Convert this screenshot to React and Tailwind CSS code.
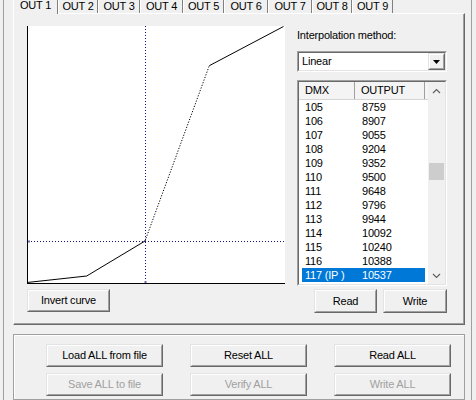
import React from "react";

const F = "font-['Liberation_Sans',Arial,sans-serif]";

function Btn({ children, className = "", disabled = false }) {
  return (
    <div
      className={`border border-t-[#e3e3e3] border-l-[#e3e3e3] border-r-[#696969] border-b-[#696969] bg-[#f0f0f0] ${className}`}
    >
      <div
        className={`h-full border border-t-white border-l-white border-r-[#a0a0a0] border-b-[#a0a0a0] flex items-center justify-center text-[11px] leading-none ${
          disabled ? "text-[#a0a0a0]" : "text-black"
        }`}
      >
        {children}
      </div>
    </div>
  );
}

const tabs = [
  ["OUT 1", 45],
  ["OUT 2", 40],
  ["OUT 3", 42],
  ["OUT 4", 43],
  ["OUT 5", 41],
  ["OUT 6", 44],
  ["OUT 7", 44],
  ["OUT 8", 40],
  ["OUT 9", 41],
];

const rows = [
  ["105", "8759"],
  ["106", "8907"],
  ["107", "9055"],
  ["108", "9204"],
  ["109", "9352"],
  ["110", "9500"],
  ["111", "9648"],
  ["112", "9796"],
  ["113", "9944"],
  ["114", "10092"],
  ["115", "10240"],
  ["116", "10388"],
  ["117 (IP )", "10537"],
];

function Graph() {
  return (
    <div className="w-[258px] h-[258px] bg-white border-l border-b border-black">
      <svg width="257" height="257" viewBox="0 0 257 257" className="block">
        <line x1="117.5" y1="0" x2="117.5" y2="257" stroke="#10107a" strokeWidth="1" strokeDasharray="1 2" />
        <line x1="0" y1="215.5" x2="257" y2="215.5" stroke="#10107a" strokeWidth="1" strokeDasharray="1 2" />
        <polyline points="-1,256.5 58.7,250 117,215" fill="none" stroke="#000" strokeWidth="1" />
        <line x1="117" y1="215" x2="181.3" y2="39.7" stroke="#000" strokeWidth="1" strokeDasharray="1.2 1.6" />
        <line x1="181.3" y1="39.7" x2="255.5" y2="0.5" stroke="#000" strokeWidth="1" />
        <rect x="0" y="214.5" width="2" height="2" fill="#6a6ab0" />
        <rect x="116.5" y="255" width="2" height="2" fill="#6a6ab0" />
      </svg>
    </div>
  );
}

function Chevron({ up }) {
  return (
    <svg width="9" height="6" viewBox="0 0 9 6">
      <polyline
        points={up ? "1,5 4.5,1.5 8,5" : "1,1 4.5,4.5 8,1"}
        fill="none"
        stroke="#606060"
        strokeWidth="1.2"
      />
    </svg>
  );
}

function ListBox() {
  return (
    <div className="mt-[8px] h-[206px] w-[150px] border border-t-[#a0a0a0] border-l-[#a0a0a0] border-r-white border-b-white">
      <div className="h-full border border-t-[#696969] border-l-[#696969] border-r-[#e3e3e3] border-b-[#e3e3e3] bg-white flex">
        <div className="w-[129px] flex flex-col">
          <div className="h-[18px] flex bg-[#f4f4f4] border-b border-[#d5d5d5]">
            <div className="w-[56px] h-full pl-[6px] flex items-center border-r border-[#a0a0a0]">DMX</div>
            <div className="w-[70px] h-full pl-[6px] flex items-center border-r border-[#a0a0a0]">OUTPUT</div>
          </div>
          <div className="flex flex-col">
            {rows.map(([a, b], i) => {
              const sel = i === rows.length - 1;
              return (
                <div
                  key={a}
                  className={`ml-[3px] w-[123px] h-[14px] flex items-center leading-none ${
                    sel ? "bg-[#0078d7] text-white" : "text-black"
                  }`}
                >
                  <div className="w-[53px] pl-[3px] whitespace-pre">{a}</div>
                  <div className="pl-[7px]">{b}</div>
                </div>
              );
            })}
          </div>
        </div>
        <div className="w-[17px] h-full bg-[#f0f0f0] flex flex-col">
          <div className="h-[17px] flex items-center justify-center">
            <Chevron up />
          </div>
          <div className="flex-1 relative">
            <div className="absolute left-[1px] right-[1px] top-[64px] h-[17px] bg-[#cdcdcd]" />
          </div>
          <div className="h-[17px] flex items-center justify-center">
            <Chevron />
          </div>
        </div>
      </div>
    </div>
  );
}

function Dropdown() {
  return (
    <div className="mt-[9px] h-[21px] w-[150px] border border-t-[#a0a0a0] border-l-[#a0a0a0] border-r-white border-b-white">
      <div className="h-full border border-t-[#696969] border-l-[#696969] border-r-[#e3e3e3] border-b-[#e3e3e3] bg-white flex items-center">
        <div className="flex-1 pl-[3px] leading-none">Linear</div>
        <div className="w-[17px] h-[17px] border border-t-[#e3e3e3] border-l-[#e3e3e3] border-r-[#696969] border-b-[#696969] bg-[#f0f0f0]">
          <div className="h-full border border-t-white border-l-white border-r-[#a0a0a0] border-b-[#a0a0a0] flex items-center justify-center">
            <svg width="7" height="4" viewBox="0 0 7 4">
              <polygon points="0,0 7,0 3.5,4" fill="#000" />
            </svg>
          </div>
        </div>
      </div>
    </div>
  );
}

export default function App() {
  return (
    <div className={`w-[476px] h-[400px] bg-[#f0f0f0] overflow-hidden ${F} text-[11px] tracking-[-0.2px] text-black flex pl-[3px]`}>
      <div className="w-[469px] h-full border-l border-r border-[#a0a0a0] pl-[9px] flex flex-col">
        {/* Tab control */}
        <div className="w-[452px] flex flex-col">
          <div className="flex h-[20px] -mt-[7px]">
            {tabs.map(([t, w], i) =>
              i === 0 ? (
                <div
                  key={t}
                  style={{ width: w }}
                  className="relative z-10 self-start h-[21px] bg-[#f0f0f0] border-l border-l-white border-r border-r-[#808080] pt-[6px] text-center leading-[13px]"
                >
                  {t}
                </div>
              ) : (
                <div
                  key={t}
                  style={{ width: w }}
                  className="self-end h-[18px] border-l border-l-white border-r border-r-[#808080] pt-[5px] text-center leading-[13px]"
                >
                  {t}
                </div>
              )
            )}
          </div>
          <div className="h-[312px] border border-t-white border-l-white border-r-[#696969] border-b-[#696969]">
            <div className="h-full border-r border-b border-[#a0a0a0] flex">
              <div className="pl-[13px] pt-[12px] flex flex-col">
                <Graph />
                <Btn className="mt-[5px] w-[83px] h-[23px]">Invert curve</Btn>
              </div>
              <div className="ml-[12px] pt-[15px] w-[150px] flex flex-col">
                <div className="h-[13px] leading-[13px]">Interpolation method:</div>
                <Dropdown />
                <ListBox />
                <div className="mt-[3px] flex justify-end gap-[6px]">
                  <Btn className="w-[63px] h-[24px]">Read</Btn>
                  <Btn className="w-[64px] h-[24px]">Write</Btn>
                </div>
              </div>
            </div>
          </div>
        </div>
        {/* Bottom group */}
        <div className="mt-[9px] w-[452px] h-[80px] border border-[#a0a0a0] shadow-[inset_1px_1px_0_white]">
          <div className="pl-[32px] pt-[9px] grid grid-cols-[117px_117px_117px] gap-x-[27px] gap-y-[6px]">
            <Btn className="h-[23px]">Load ALL from file</Btn>
            <Btn className="h-[23px]">Reset ALL</Btn>
            <Btn className="h-[23px]">Read ALL</Btn>
            <Btn className="h-[23px]" disabled>Save ALL to file</Btn>
            <Btn className="h-[23px]" disabled>Verify ALL</Btn>
            <Btn className="h-[23px]" disabled>Write ALL</Btn>
          </div>
        </div>
      </div>
    </div>
  );
}
